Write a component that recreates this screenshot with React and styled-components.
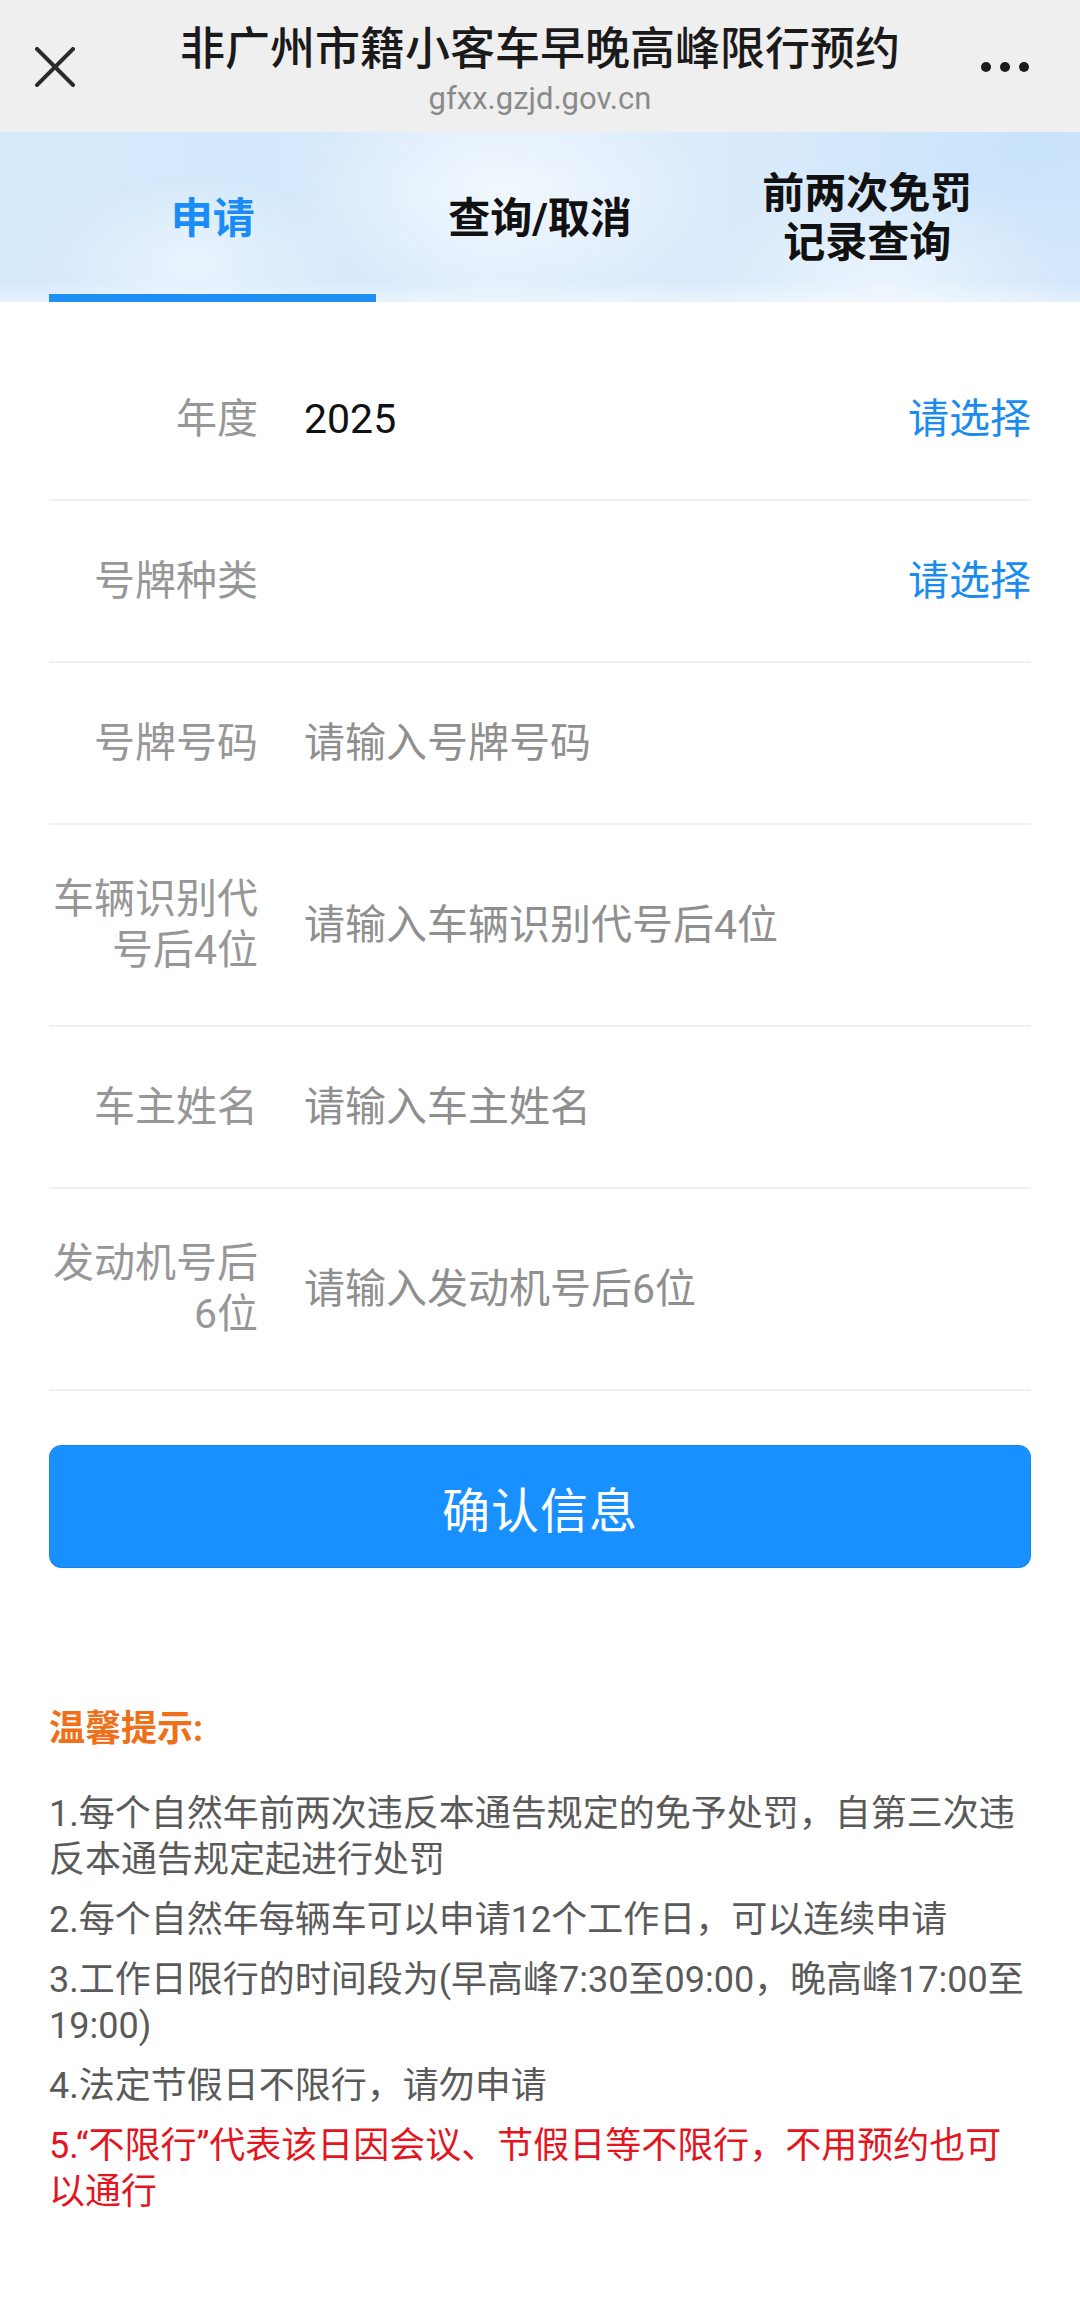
import React from "react";
import styled, { createGlobalStyle } from "styled-components";

const Global = createGlobalStyle`
  html, body { margin: 0; padding: 0; background: #ffffff; }
  body { font-family: Roboto, "Noto Sans CJK SC", "Noto Sans", sans-serif; -webkit-font-smoothing: antialiased; }
  * { box-sizing: border-box; }
`;

const Page = styled.div`
  width: 1080px;
  min-height: 2319px;
  background: #fff;
`;

const TopBar = styled.header`
  height: 132px;
  background: #efefef;
  display: grid;
  grid-template-columns: 110px 1fr 110px;
  align-items: center;
`;

const IconCell = styled.div`
  display: flex;
  align-items: center;
  justify-content: ${(p) => (p.$right ? "flex-end" : "center")};
  padding-right: ${(p) => (p.$right ? "51px" : "0")};
  padding-top: 2px;
`;

const TitleCol = styled.div`
  display: flex;
  flex-direction: column;
  align-items: center;
  align-self: start;
  padding-top: 21px;
`;

const Title = styled.div`
  font-size: 45px;
  line-height: 58px;
  font-weight: 500;
  color: #1a1a1a;
  white-space: nowrap;
`;

const Url = styled.div`
  font-size: 31px;
  line-height: 40px;
  color: #8a8a8a;
`;

const TabsBar = styled.nav`
  height: 170px;
  padding: 0 49px;
  display: grid;
  grid-template-columns: repeat(3, 1fr);
  background:
    linear-gradient(180deg, rgba(255,255,255,0) 88%, rgba(255,255,255,0.4) 100%),
    radial-gradient(ellipse 160px 90px at 18% 78%, rgba(255,255,255,0.5), rgba(255,255,255,0) 100%),
    radial-gradient(ellipse 220px 110px at 47% 35%, rgba(255,255,255,0.55), rgba(255,255,255,0) 100%),
    radial-gradient(ellipse 180px 120px at 82% 92%, rgba(255,255,255,0.5), rgba(255,255,255,0) 100%),
    radial-gradient(ellipse 260px 120px at 95% 10%, rgba(196,225,250,0.7), rgba(196,225,250,0) 100%),
    linear-gradient(90deg, #d6e9fb 0%, #d3e8fb 25%, #e0eefc 45%, #d9eafb 70%, #d3e7fb 100%);
`;

const Tab = styled.div`
  display: flex;
  align-items: center;
  justify-content: center;
  text-align: center;
  font-size: 42px;
  line-height: 49px;
  font-weight: 700;
  color: ${(p) => (p.$active ? "#1a8cf5" : "#111111")};
  box-shadow: ${(p) => (p.$active ? "inset 0 -8px 0 #1e8ff5" : "none")};
  padding-top: 2px;
`;

const Form = styled.section`
  margin-top: 37px;
  padding: 0 49px;
`;

const Row = styled.div`
  display: flex;
  align-items: center;
  padding: 49px 0;
  border-bottom: 2px solid #f0f0f0;
`;

const Label = styled.div`
  width: 209px;
  flex: none;
  text-align: right;
  font-size: 41px;
  line-height: 51px;
  color: #979797;
`;

const Value = styled.div`
  flex: 1;
  margin-left: 46px;
  min-height: 62px;
  display: flex;
  align-items: center;
  font-size: 41px;
  line-height: 51px;
  color: ${(p) => (p.$placeholder ? "#8f8f8f" : "#111111")};
`;

const Picker = styled.div`
  font-size: 41px;
  line-height: 51px;
  color: #1a8cf0;
`;

const Submit = styled.button`
  display: block;
  width: 982px;
  height: 123px;
  margin: 54px 49px 0;
  border: 1px solid #1a84e6;
  border-radius: 12px;
  background: #1990ff;
  color: #fff;
  font-family: inherit;
  font-size: 48px;
  letter-spacing: 1px;
`;

const Tips = styled.section`
  padding: 0 49px 60px;
  margin-top: 138px;
`;

const TipsTitle = styled.div`
  font-size: 36px;
  line-height: 46px;
  font-weight: 700;
  color: #f0701a;
  margin-bottom: 39px;
`;

const Tip = styled.p`
  margin: 0 0 14px;
  font-size: 36px;
  line-height: 46px;
  color: ${(p) => (p.$warn ? "#e3161f" : "#5a5a5a")};
`;

const CloseIcon = () => (
  <svg width="40" height="40" viewBox="0 0 40 40">
    <path d="M2 2 L38 38 M38 2 L2 38" stroke="#2b2b2b" strokeWidth="4" strokeLinecap="square" fill="none" />
  </svg>
);

const MoreIcon = () => (
  <svg width="48" height="12" viewBox="0 0 48 12">
    <circle cx="5" cy="6" r="5" fill="#1c1c1c" />
    <circle cx="24" cy="6" r="5" fill="#1c1c1c" />
    <circle cx="43" cy="6" r="5" fill="#1c1c1c" />
  </svg>
);

const fields = [
  { label: "年度", value: "2025", picker: true },
  { label: "号牌种类", value: "", picker: true },
  { label: "号牌号码", placeholder: "请输入号牌号码" },
  { label: ["车辆识别代", "号后4位"], placeholder: "请输入车辆识别代号后4位" },
  { label: "车主姓名", placeholder: "请输入车主姓名" },
  { label: ["发动机号后", "6位"], placeholder: "请输入发动机号后6位" },
];

const tips = [
  "1.每个自然年前两次违反本通告规定的免予处罚，自第三次违反本通告规定起进行处罚",
  "2.每个自然年每辆车可以申请12个工作日，可以连续申请",
  "3.工作日限行的时间段为(早高峰7:30至09:00，晚高峰17:00至19:00)",
  "4.法定节假日不限行，请勿申请",
];

export default function App() {
  return (
    <Page>
      <Global />
      <TopBar>
        <IconCell>
          <CloseIcon />
        </IconCell>
        <TitleCol>
          <Title>非广州市籍小客车早晚高峰限行预约</Title>
          <Url>gfxx.gzjd.gov.cn</Url>
        </TitleCol>
        <IconCell $right>
          <MoreIcon />
        </IconCell>
      </TopBar>

      <TabsBar>
        <Tab $active>申请</Tab>
        <Tab>查询/取消</Tab>
        <Tab>
          前两次免罚
          <br />
          记录查询
        </Tab>
      </TabsBar>

      <Form>
        {fields.map((f, i) => (
          <Row key={i}>
            <Label>
              {Array.isArray(f.label)
                ? f.label.map((l, j) => (
                    <React.Fragment key={j}>
                      {j > 0 && <br />}
                      {l}
                    </React.Fragment>
                  ))
                : f.label}
            </Label>
            <Value $placeholder={!!f.placeholder}>{f.placeholder || f.value}</Value>
            {f.picker && <Picker>请选择</Picker>}
          </Row>
        ))}
      </Form>

      <Submit type="button">确认信息</Submit>

      <Tips>
        <TipsTitle>温馨提示:</TipsTitle>
        {tips.map((t, i) => (
          <Tip key={i}>{t}</Tip>
        ))}
        <Tip $warn>5.“不限行”代表该日因会议、节假日等不限行，不用预约也可以通行</Tip>
      </Tips>
    </Page>
  );
}
